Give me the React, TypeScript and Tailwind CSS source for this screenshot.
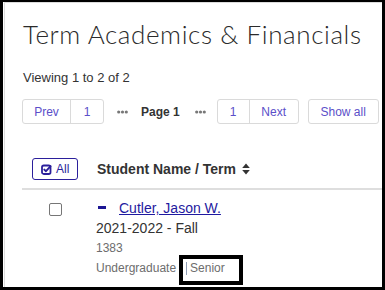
import React from 'react'

const sans = { fontFamily: '"Liberation Sans", Arial, sans-serif' }

function Dots() {
  return (
    <svg width="11" height="4" viewBox="0 0 11 4" className="shrink-0">
      <circle cx="1.7" cy="2" r="1.6" fill="#777" />
      <circle cx="5.5" cy="2" r="1.6" fill="#777" />
      <circle cx="9.3" cy="2" r="1.6" fill="#777" />
    </svg>
  )
}

function CheckSquareIcon() {
  return (
    <svg width="11" height="11" viewBox="0 0 11 11" fill="none" className="shrink-0">
      <rect x="1" y="1.5" width="8.5" height="8.5" rx="1.8" stroke="#2b1f9b" strokeWidth="1.8" />
      <path d="M3.3 5.6 L5 7.2 L9.6 2.2" stroke="#2b1f9b" strokeWidth="1.9" strokeLinecap="round" strokeLinejoin="round" />
    </svg>
  )
}

function SortIcon() {
  return (
    <svg width="8" height="12" viewBox="0 0 8 12" className="shrink-0">
      <path d="M4 0.5 L7.8 5 L0.2 5 Z" fill="#333" />
      <path d="M4 11.5 L7.8 7 L0.2 7 Z" fill="#333" />
    </svg>
  )
}

export default function App() {
  return (
    <div className="relative w-[385px] h-[290px] bg-black pl-[3px] pt-[2px] pr-[3px] pb-[3px]" style={sans}>
      <div className="w-full h-full bg-white overflow-hidden">
        {/* card */}
        <div className="ml-[1px] w-[600px] h-[400px] border-l border-t border-[#dcdcdc] pl-[17px]">
          <h1
            className="mt-[15px] pl-[1px] text-[26px] leading-[32px] font-light tracking-[0.6px] text-[#2a2a2a] whitespace-nowrap"
            style={{ fontFamily: 'Lato, "Open Sans", sans-serif' }}
          >
            Term Academics &amp; Financials
          </h1>

          <p className="mt-[18px] pl-[1px] text-[13px] leading-[20px] text-[#333]">Viewing 1 to 2 of 2</p>

          {/* pagination */}
          <div className="mt-[11px] flex items-center text-[12px] text-[#5b4fc9]">
            <div className="flex h-[25px] rounded-[3px] border border-[#dadada]">
              <button className="w-[48px] flex items-center justify-center border-r border-[#dadada]">Prev</button>
              <button className="w-[32px] flex items-center justify-center">1</button>
            </div>
            <div className="ml-[13px]"><Dots /></div>
            <span className="ml-[13px] font-bold text-[#333]">Page 1</span>
            <div className="ml-[15px]"><Dots /></div>
            <div className="ml-[11px] flex h-[25px] rounded-[3px] border border-[#dadada]">
              <button className="w-[32px] flex items-center justify-center border-r border-[#dadada]">1</button>
              <button className="w-[48px] flex items-center justify-center">Next</button>
            </div>
            <button className="ml-[9px] w-[71px] h-[25px] flex items-center justify-center rounded-[3px] border border-[#dadada]">
              Show all
            </button>
          </div>

          {/* table header */}
          <div className="mt-[34px] flex items-center pb-[8px] border-b-2 border-[#dedede]">
            <div className="w-[66px] flex justify-center">
              <button className="h-[22px] w-[46px] flex items-center gap-[4px] pl-[8px] rounded-[3px] border border-[#2b1f9b] text-[12px] text-[#2b1f9b]">
                <CheckSquareIcon />
                All
              </button>
            </div>
            <div className="pl-[9px] flex items-center gap-[6px] text-[14px] font-bold text-[#333]">
              Student Name / Term
              <SortIcon />
            </div>
          </div>

          {/* row */}
          <div className="pt-[8px] flex items-start">
            <div className="w-[66px] flex justify-center pt-[5px]">
              <input type="checkbox" className="w-[13px] h-[13px] m-0 appearance-none rounded-[2px] border border-[#767676] bg-white" />
            </div>
            <div className="pl-[8px]">
              <div className="flex items-center text-[14px] leading-[20px]">
                <span className="ml-[2px] mr-[13px] mt-[-2px] inline-block w-[8px] h-[3px] bg-[#1c1693]" />
                <a href="#" className="text-[#1f1aa0] underline">Cutler, Jason W.</a>
              </div>
              <div className="text-[14px] leading-[20px] text-[#333]">2021-2022 - Fall</div>
              <div className="text-[12px] leading-[20px] text-[#6d6d6d]">1383</div>
              <div className="flex items-center text-[12px] leading-[20px] text-[#6d6d6d]">
                <span>Undergraduate</span>
                <span className="ml-[10px] h-[13px] border-l border-[#8f9db5]" />
                <span className="ml-[3px]">Senior</span>
              </div>
            </div>
          </div>
        </div>
      </div>

      {/* annotation box */}
      <div className="absolute left-[179px] top-[255px] w-[64px] h-[30px] border-[4px] border-black" />
    </div>
  )
}
